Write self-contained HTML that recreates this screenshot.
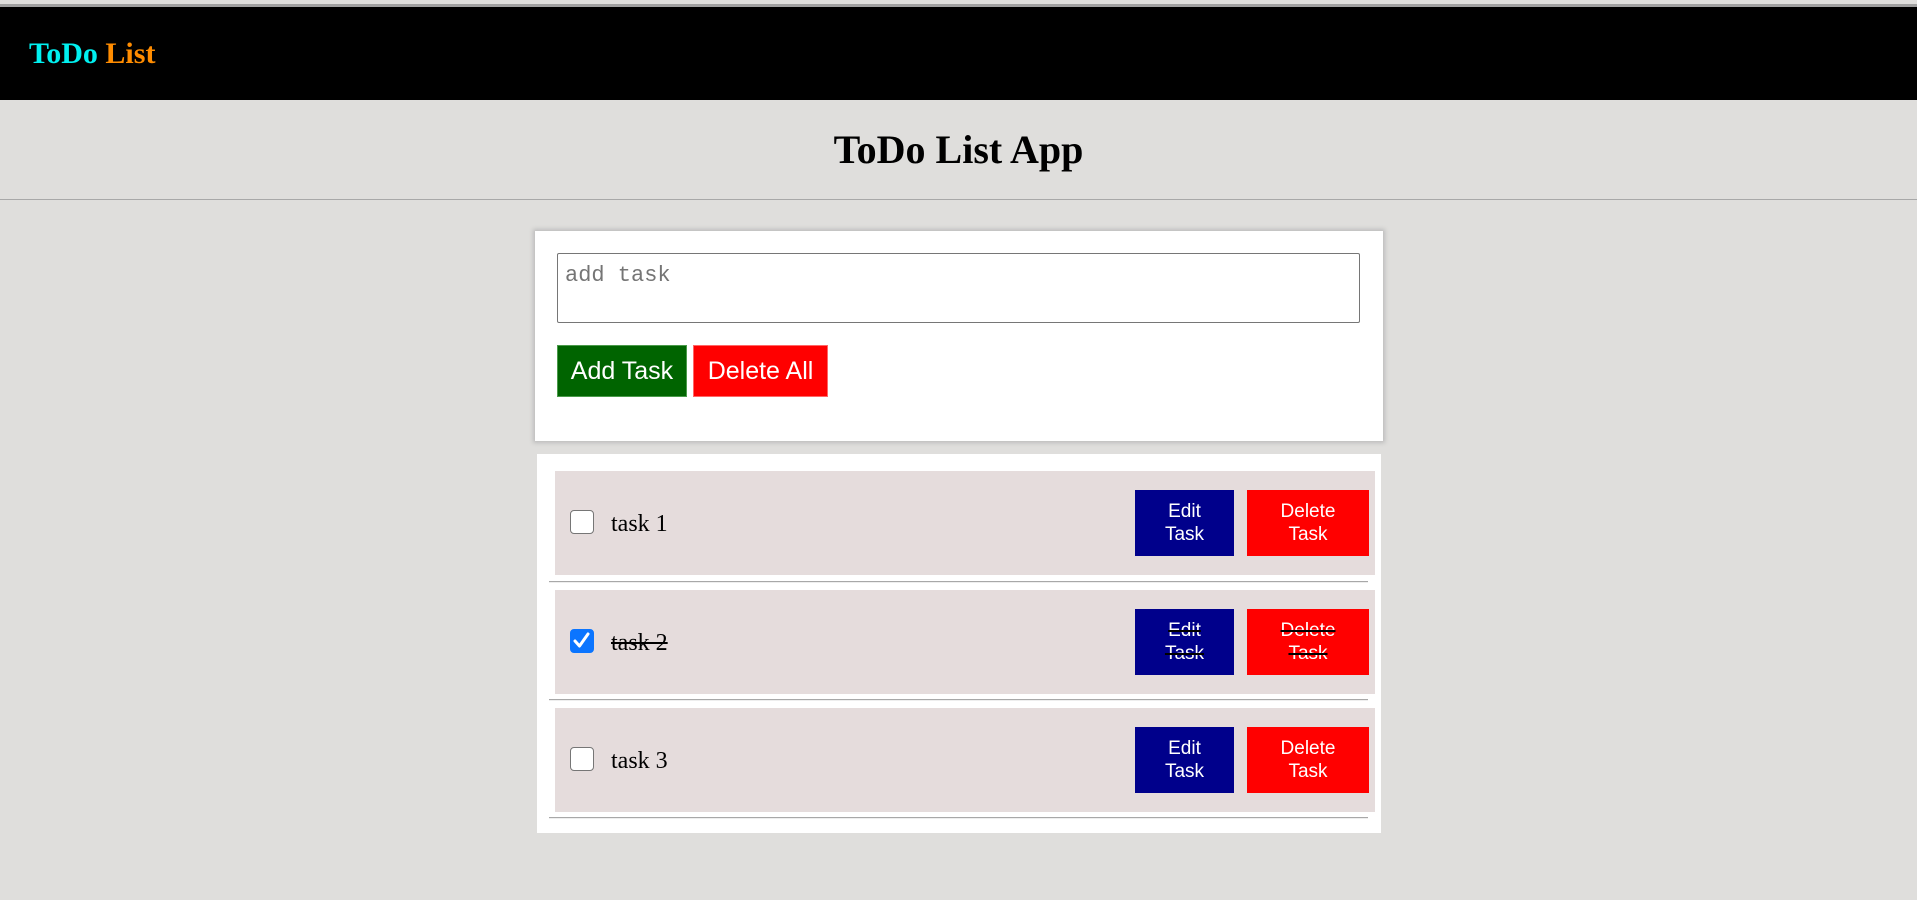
<!DOCTYPE html>
<html><head><meta charset="utf-8"><style>
*{box-sizing:border-box;margin:0;padding:0}
body{width:1917px;height:900px;background:#dfdedc;position:relative;overflow:hidden;font-family:"Liberation Serif",serif}
.a{position:absolute}
.topline{left:0;top:4px;width:1917px;height:3px;background:#a0a0a0}
.hdr{left:0;top:7px;width:1917px;height:93px;background:#000}
.logo{left:29px;top:37px;font-size:30px;font-weight:bold;line-height:34px}
h1{position:absolute;left:0;width:1917px;top:126px;text-align:center;font-size:40px;line-height:48px;font-weight:bold}
.sep{left:0;top:199px;width:1917px;height:1px;background:#a8a8a8}
.card1{left:535px;top:231px;width:848px;height:210px;background:#fff;box-shadow:0 0 4px 2px #bdbdbd}
.ta{left:557px;top:253px;width:803px;height:70px;border:1px solid #767676;border-radius:2px;background:#fff;font-family:"Liberation Mono",monospace;font-size:22px;color:#757575;padding:9px 7px}
.btn{color:#fff;font-family:"Liberation Sans",sans-serif;display:flex;align-items:center;justify-content:center;text-align:center}
.b1{left:557px;top:345px;width:130px;height:52px;background:#006400;font-size:25px;border:1px solid #4a9a4a}
.b2{left:693px;top:345px;width:135px;height:52px;background:#f00;font-size:25px;border:1px solid #f66}
.card2{left:537px;top:454px;width:844px;height:379px;background:#fff}
.item{left:555px;width:820px;height:104px;background:#e5dcdc}
.hr{left:549px;width:819px;height:2px;background:#a8a8a8;border-bottom:1px solid #eee}
.cb{left:570px;width:24px;height:24px;border:1.5px solid #767676;border-radius:4px;background:#fff}
.cbc{background:#0b75ff;border-color:#0b75ff}
.txt{left:611px;font-size:24px;line-height:28px}
.e{left:1135px;width:99px;height:66px;background:#00008b;font-size:19px;line-height:23px}
.d{left:1247px;width:122px;height:66px;background:#f00;font-size:19px;line-height:23px}
.s{text-decoration:line-through;text-decoration-color:#000;text-decoration-thickness:2px}
</style></head><body>
<div class="a topline"></div>
<div class="a hdr"></div>
<div class="a logo"><span style="color:#00f0f0">ToDo</span> <span style="color:#ff8c00">List</span></div>
<h1>ToDo List App</h1>
<div class="a sep"></div>
<div class="a card1"></div>
<div class="a ta">add task</div>
<div class="a btn b1">Add Task</div>
<div class="a btn b2">Delete All</div>
<div class="a card2"></div>

<div class="a item" style="top:471px"></div>
<div class="a cb" style="top:510px"></div>
<div class="a txt" style="top:510px">task 1</div>
<div class="a btn e" style="top:490px">Edit<br>Task</div>
<div class="a btn d" style="top:490px">Delete<br>Task</div>
<div class="a hr" style="top:581px"></div>

<div class="a item" style="top:590px"></div>
<div class="a cb cbc" style="top:629px"><svg width="21" height="21" viewBox="0 0 21 21"><path d="M4 11 L8.5 16 L17 4" stroke="#fff" stroke-width="3" fill="none" stroke-linecap="round" stroke-linejoin="round"/></svg></div>
<div class="a txt s" style="top:629px">task 2</div>
<div class="a btn e s" style="top:609px">Edit<br>Task</div>
<div class="a btn d s" style="top:609px">Delete<br>Task</div>
<div class="a hr" style="top:699px"></div>

<div class="a item" style="top:708px"></div>
<div class="a cb" style="top:747px"></div>
<div class="a txt" style="top:747px">task 3</div>
<div class="a btn e" style="top:727px">Edit<br>Task</div>
<div class="a btn d" style="top:727px">Delete<br>Task</div>
<div class="a hr" style="top:817px"></div>
</body></html>
